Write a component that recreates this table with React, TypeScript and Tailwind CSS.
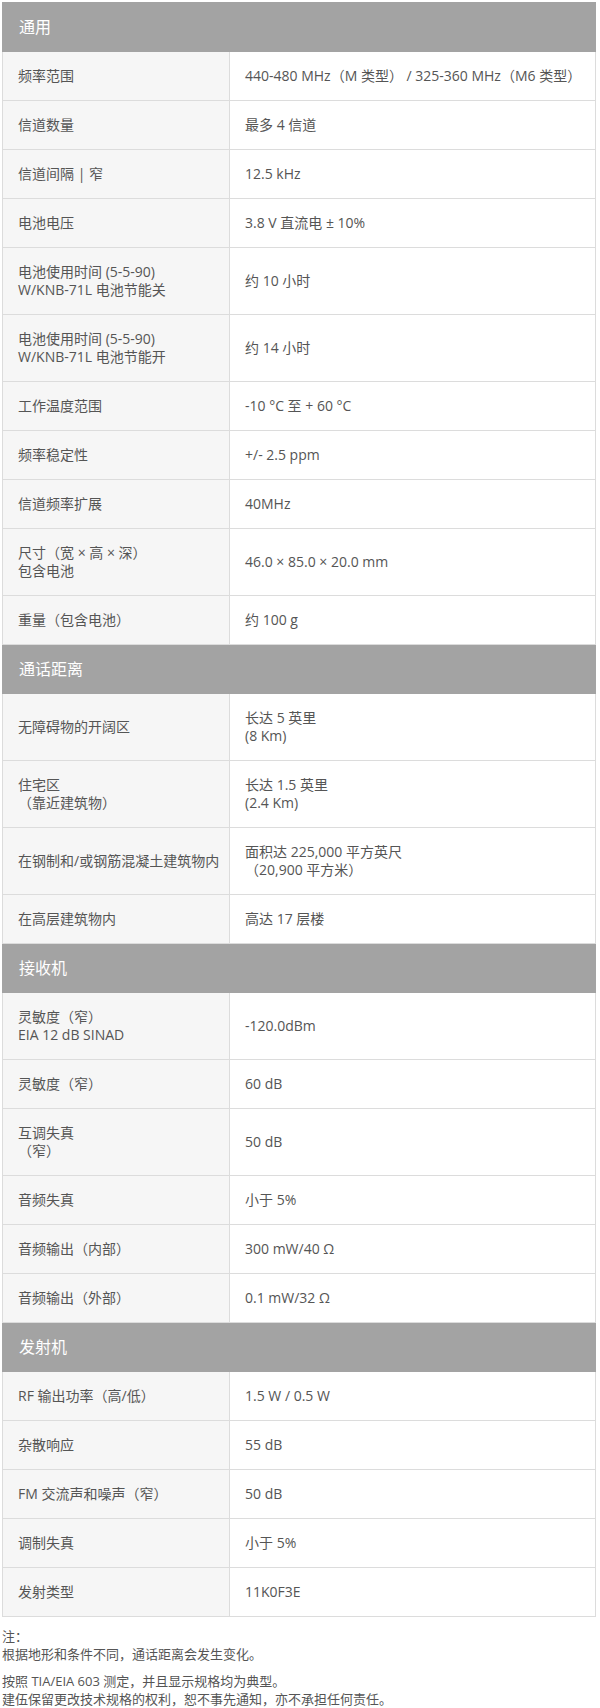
type Row = { label: string[]; value: string[] };
type Section = { title: string; rows: Row[] };

const sections: Section[] = [
  {
    title: "通用",
    rows: [
      { label: ["频率范围"], value: ["440-480 MHz（M 类型） / 325-360 MHz（M6 类型）"] },
      { label: ["信道数量"], value: ["最多 4 信道"] },
      { label: ["信道间隔 | 窄"], value: ["12.5 kHz"] },
      { label: ["电池电压"], value: ["3.8 V 直流电 ± 10%"] },
      { label: ["电池使用时间 (5-5-90)", "W/KNB-71L 电池节能关"], value: ["约 10 小时"] },
      { label: ["电池使用时间 (5-5-90)", "W/KNB-71L 电池节能开"], value: ["约 14 小时"] },
      { label: ["工作温度范围"], value: ["-10 °C 至 + 60 °C"] },
      { label: ["频率稳定性"], value: ["+/- 2.5 ppm"] },
      { label: ["信道频率扩展"], value: ["40MHz"] },
      { label: ["尺寸（宽 × 高 × 深）", "包含电池"], value: ["46.0 × 85.0 × 20.0 mm"] },
      { label: ["重量（包含电池）"], value: ["约 100 g"] },
    ],
  },
  {
    title: "通话距离",
    rows: [
      { label: ["无障碍物的开阔区"], value: ["长达 5 英里", "(8 Km)"] },
      { label: ["住宅区", "（靠近建筑物）"], value: ["长达 1.5 英里", "(2.4 Km)"] },
      { label: ["在钢制和/或钢筋混凝土建筑物内"], value: ["面积达 225,000 平方英尺", "（20,900 平方米）"] },
      { label: ["在高层建筑物内"], value: ["高达 17 层楼"] },
    ],
  },
  {
    title: "接收机",
    rows: [
      { label: ["灵敏度（窄）", "EIA 12 dB SINAD"], value: ["-120.0dBm"] },
      { label: ["灵敏度（窄）"], value: ["60 dB"] },
      { label: ["互调失真", "（窄）"], value: ["50 dB"] },
      { label: ["音频失真"], value: ["小于 5%"] },
      { label: ["音频输出（内部）"], value: ["300 mW/40 Ω"] },
      { label: ["音频输出（外部）"], value: ["0.1 mW/32 Ω"] },
    ],
  },
  {
    title: "发射机",
    rows: [
      { label: ["RF 输出功率（高/低）"], value: ["1.5 W / 0.5 W"] },
      { label: ["杂散响应"], value: ["55 dB"] },
      { label: ["FM 交流声和噪声（窄）"], value: ["50 dB"] },
      { label: ["调制失真"], value: ["小于 5%"] },
      { label: ["发射类型"], value: ["11K0F3E"] },
    ],
  },
];

function Lines({ lines }: { lines: string[] }) {
  return (
    <>
      {lines.map((l, i) => (
        <div key={i}>{l}</div>
      ))}
    </>
  );
}

export default function App() {
  return (
    <div
      className="bg-white pt-[2px] pl-[2px] text-[#555] w-[600px] min-h-[1708px]"
      style={{ fontFamily: '"Open Sans", "Noto Sans CJK SC", sans-serif' }}
    >
      <table className="w-[594px] border-collapse table-fixed">
        <colgroup>
          <col className="w-[227px]" />
          <col />
        </colgroup>
        <tbody>
          {sections.map((s) => (
            <>
              <tr key={s.title}>
                <td
                  colSpan={2}
                  className="bg-[#a3a3a3] text-white text-[16px] leading-[18px] px-[16px] py-[15px] border border-[#a3a3a3]"
                >
                  {s.title}
                </td>
              </tr>
              {s.rows.map((r, i) => (
                <tr key={s.title + i}>
                  <td className="bg-[#f6f6f6] border border-[#dcdcdc] pl-[15px] pr-[8px] py-[15px] text-[14px] leading-[18px] align-middle whitespace-nowrap">
                    <Lines lines={r.label} />
                  </td>
                  <td className="bg-white border border-[#dcdcdc] px-[15px] py-[15px] text-[14px] leading-[18px] align-middle whitespace-nowrap">
                    <Lines lines={r.value} />
                  </td>
                </tr>
              ))}
            </>
          ))}
        </tbody>
      </table>
      <div className="mt-[10px] text-[13px] leading-[18px]">
        <p>注：</p>
        <p>根据地形和条件不同，通话距离会发生变化。</p>
        <p className="mt-[9px]">按照 TIA/EIA 603 测定，并且显示规格均为典型。</p>
        <p>建伍保留更改技术规格的权利，恕不事先通知，亦不承担任何责任。</p>
      </div>
    </div>
  );
}
